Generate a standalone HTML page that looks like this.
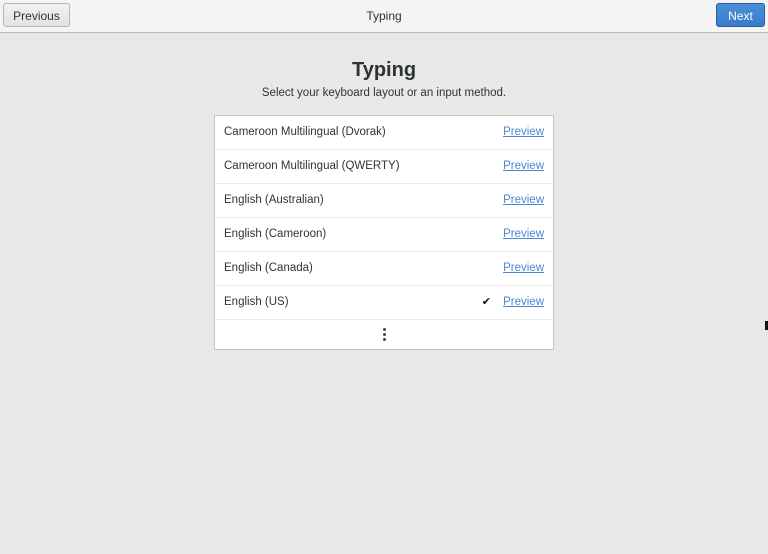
<!DOCTYPE html>
<html><head><style>
html,body{margin:0;padding:0;width:768px;height:554px;background:#e8e8e7;font-family:"Liberation Sans",sans-serif;overflow:hidden;position:relative}
.hdr{position:absolute;left:0;top:0;width:768px;height:32px;background:#f4f4f3;border-bottom:1px solid #b8b8b6}
.btn{position:absolute;top:3px;height:24px;border-radius:3px;font-size:12px;line-height:24px;text-align:center;box-sizing:border-box}
.prev{left:3px;width:67px;background:linear-gradient(#f2f2f1,#e2e2e0);border:1px solid #b5b5b2;color:#333}
.next{left:716px;width:49px;background:linear-gradient(#4a8fd8,#3a7bc8);border:1px solid #2a5d9e;color:#fff}
.title{position:absolute;top:9px;width:768px;text-align:center;font-size:12px;color:#2e3436}
h1{position:absolute;top:59px;width:768px;text-align:center;margin:0;font-size:20px;font-weight:bold;color:#2e3436}
.sub{position:absolute;top:87px;width:768px;text-align:center;font-size:11.5px;color:#2e3436}
.list{position:absolute;left:214px;top:115px;width:340px;height:235px;box-sizing:border-box;background:#fff;border:1px solid #c4c4c2}
.row{height:34px;box-sizing:border-box;border-bottom:1px solid #ebebea;position:relative;font-size:11.5px;color:#2e3436;line-height:33px;padding-left:9px}
.row a{position:absolute;right:9px;top:0;color:#4a86d0;text-decoration:underline}
.chk{position:absolute;right:62px;top:0;font-size:11px;color:#111}
.dots{position:absolute;left:168px;top:212px}
.dots i{display:block;width:3px;height:3px;background:#444;border-radius:50%;margin-bottom:2px}
</style></head><body>
<div class="hdr">
<div class="btn prev">Previous</div>
<div class="title">Typing</div>
<div class="btn next">Next</div>
</div>
<h1>Typing</h1>
<div class="sub">Select your keyboard layout or an input method.</div>
<div class="list">
<div class="row">Cameroon Multilingual (Dvorak)<a>Preview</a></div>
<div class="row">Cameroon Multilingual (QWERTY)<a>Preview</a></div>
<div class="row">English (Australian)<a>Preview</a></div>
<div class="row">English (Cameroon)<a>Preview</a></div>
<div class="row">English (Canada)<a>Preview</a></div>
<div class="row">English (US)<span class="chk">✔</span><a>Preview</a></div>
<div class="dots"><i></i><i></i><i></i></div>
</div>
<div style="position:absolute;left:765px;top:321px;width:3px;height:9px;background:#111"></div>
</body></html>
